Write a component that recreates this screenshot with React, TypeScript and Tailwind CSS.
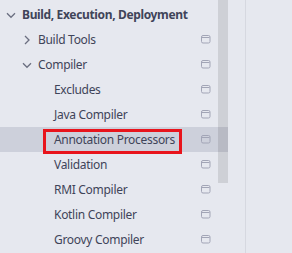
import React from "react";

type Row = {
  label: string;
  level: number;
  expand?: "open" | "closed";
  bold?: boolean;
  icon?: boolean;
  selected?: boolean;
};

const rows: Row[] = [
  { label: "Build, Execution, Deployment", level: 0, expand: "open", bold: true },
  { label: "Build Tools", level: 1, expand: "closed", icon: true },
  { label: "Compiler", level: 1, expand: "open", icon: true },
  { label: "Excludes", level: 2, icon: true },
  { label: "Java Compiler", level: 2, icon: true },
  { label: "Annotation Processors", level: 2, icon: true, selected: true },
  { label: "Validation", level: 2, icon: true },
  { label: "RMI Compiler", level: 2, icon: true },
  { label: "Kotlin Compiler", level: 2, icon: true },
  { label: "Groovy Compiler", level: 2, icon: true },
];

function Chevron({ open }: { open: boolean }) {
  return (
    <svg width="16" height="16" viewBox="0 0 16 16" fill="none" className="shrink-0">
      {open ? (
        <path d="M4 6.3 L8 10.3 L12 6.3" stroke="#6b6f80" strokeWidth="1.3" />
      ) : (
        <path d="M6 4 L10 8 L6 12" stroke="#6b6f80" strokeWidth="1.3" />
      )}
    </svg>
  );
}

function ProjectIcon() {
  return (
    <svg width="10" height="9" viewBox="0 0 10 9" fill="none" className="shrink-0">
      <rect x="0.5" y="0.5" width="8.5" height="7.5" rx="1.5" stroke="#a2a5b6" strokeWidth="1" />
      <path d="M1 2.5 H8.5" stroke="#a2a5b6" strokeWidth="1" />
    </svg>
  );
}

export default function App() {
  return (
    <div
      className="flex w-[292px] h-[253px] bg-[#e6e8ef] overflow-hidden text-[12px] text-[#3f4459]"
      style={{ fontFamily: '"Noto Sans", "Open Sans", sans-serif' }}
    >
      <div className="relative w-[246px] shrink-0 border-r border-[#d6d8e0] pt-[2px]">
        {rows.map((r) => (
          <div
            key={r.label}
            className={
              "relative flex items-center h-[25px] w-[228px] pr-[17px] " +
              (r.selected ? "bg-[#cdd0db]" : "")
            }
            style={{ paddingLeft: 3 + r.level * 16 }}
          >
            {r.expand ? <Chevron open={r.expand === "open"} /> : <span className="w-4 shrink-0" />}
            <span
              className={
                "ml-[3px] flex-1 whitespace-nowrap leading-none " +
                (r.bold ? "font-bold tracking-[-0.35px]" : "tracking-[-0.3px]")
              }
            >
              {r.label}
            </span>
            {r.icon && <ProjectIcon />}
            {r.selected && (
              <div className="absolute left-[43px] top-[2px] w-[139px] h-[25px] border-[3px] border-[#e8141c]" />
            )}
          </div>
        ))}
        <div className="absolute left-[218px] top-0 w-[10px] h-[183px] bg-black/10" />
      </div>
      <div className="flex-1" />
    </div>
  );
}
